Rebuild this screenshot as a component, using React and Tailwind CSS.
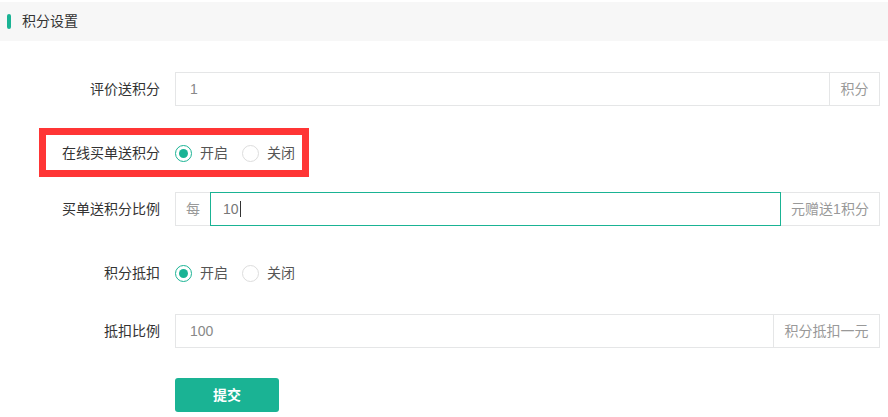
import React from "react";

const font = { fontFamily: '"Liberation Sans", "Noto Sans CJK SC", sans-serif' };

function Label({ children }) {
  return (
    <div className="w-[160px] shrink-0 pr-0 text-right text-[14px] text-[#333]">{children}</div>
  );
}

function Radio({ checked, children }) {
  return (
    <div className="flex items-center gap-[8px]">
      {checked ? (
        <span className="flex h-[17px] w-[17px] items-center justify-center rounded-full border-[1.5px] border-[#1ab394] bg-white">
          <span className="h-[9px] w-[9px] rounded-full bg-[#1ab394]" />
        </span>
      ) : (
        <span className="h-[17px] w-[17px] rounded-full border border-[#ddd] bg-white" />
      )}
      <span className="text-[14px] text-[#555]">{children}</span>
    </div>
  );
}

export default function App() {
  return (
    <div className="w-[888px] h-[417px] bg-white overflow-hidden" style={font}>
      <div className="mt-[2px] flex h-[39px] items-center bg-[#f7f7f7] pl-[7px]">
        <span className="h-[15px] w-[4px] rounded-full bg-[#1ab394]" />
        <span className="ml-[11px] text-[14px] text-[#333]">积分设置</span>
      </div>

      <div className="pt-[31px] pr-[8px]">
        {/* row 1 */}
        <div className="flex items-center">
          <Label>评价送积分</Label>
          <div className="ml-[15px] flex h-[34px] flex-1 border border-[#e5e6e7]">
            <div className="flex flex-1 items-center pl-[14px] text-[14px] text-[#888]">1</div>
            <div className="flex w-[50px] items-center justify-center border-l border-[#e5e6e7] text-[14px] text-[#999]">积分</div>
          </div>
        </div>

        {/* row 2 */}
        <div className="relative mt-[30px] flex h-[34px] items-center">
          <Label>在线买单送积分</Label>
          <div className="ml-[15px] flex items-center gap-[14px]">
            <Radio checked>开启</Radio>
            <Radio>关闭</Radio>
          </div>
          <div className="pointer-events-none absolute left-[39px] top-[-8px] h-[49px] w-[270px] border-[7px] border-[#ff3535]" />
        </div>

        {/* row 3 */}
        <div className="mt-[22px] flex items-center">
          <Label>买单送积分比例</Label>
          <div className="ml-[15px] flex h-[34px] flex-1">
            <div className="flex w-[35px] items-center justify-center border border-r-0 border-[#e5e6e7] text-[14px] text-[#999]">每</div>
            <div className="flex flex-1 items-center border border-[#1ab394] pl-[12px] text-[14px] text-[#777]">
              10<span className="ml-[1px] h-[16px] w-px bg-[#333]" />
            </div>
            <div className="flex w-[99px] items-center justify-center border border-l-0 border-[#e5e6e7] text-[14px] text-[#999]">元赠送1积分</div>
          </div>
        </div>

        {/* row 4 */}
        <div className="mt-[30px] flex h-[34px] items-center">
          <Label>积分抵扣</Label>
          <div className="ml-[15px] flex items-center gap-[14px]">
            <Radio checked>开启</Radio>
            <Radio>关闭</Radio>
          </div>
        </div>

        {/* row 5 */}
        <div className="mt-[24px] flex items-center">
          <Label>抵扣比例</Label>
          <div className="ml-[15px] flex h-[34px] flex-1 border border-[#e5e6e7]">
            <div className="flex flex-1 items-center pl-[14px] text-[14px] text-[#888]">100</div>
            <div className="flex w-[106px] items-center justify-center border-l border-[#e5e6e7] text-[14px] text-[#999]">积分抵扣一元</div>
          </div>
        </div>

        {/* submit */}
        <div className="mt-[30px] pl-[175px]">
          <button className="h-[34px] w-[104px] rounded-[3px] bg-[#1ab394] text-[14px] font-bold text-white">提交</button>
        </div>
      </div>
    </div>
  );
}
